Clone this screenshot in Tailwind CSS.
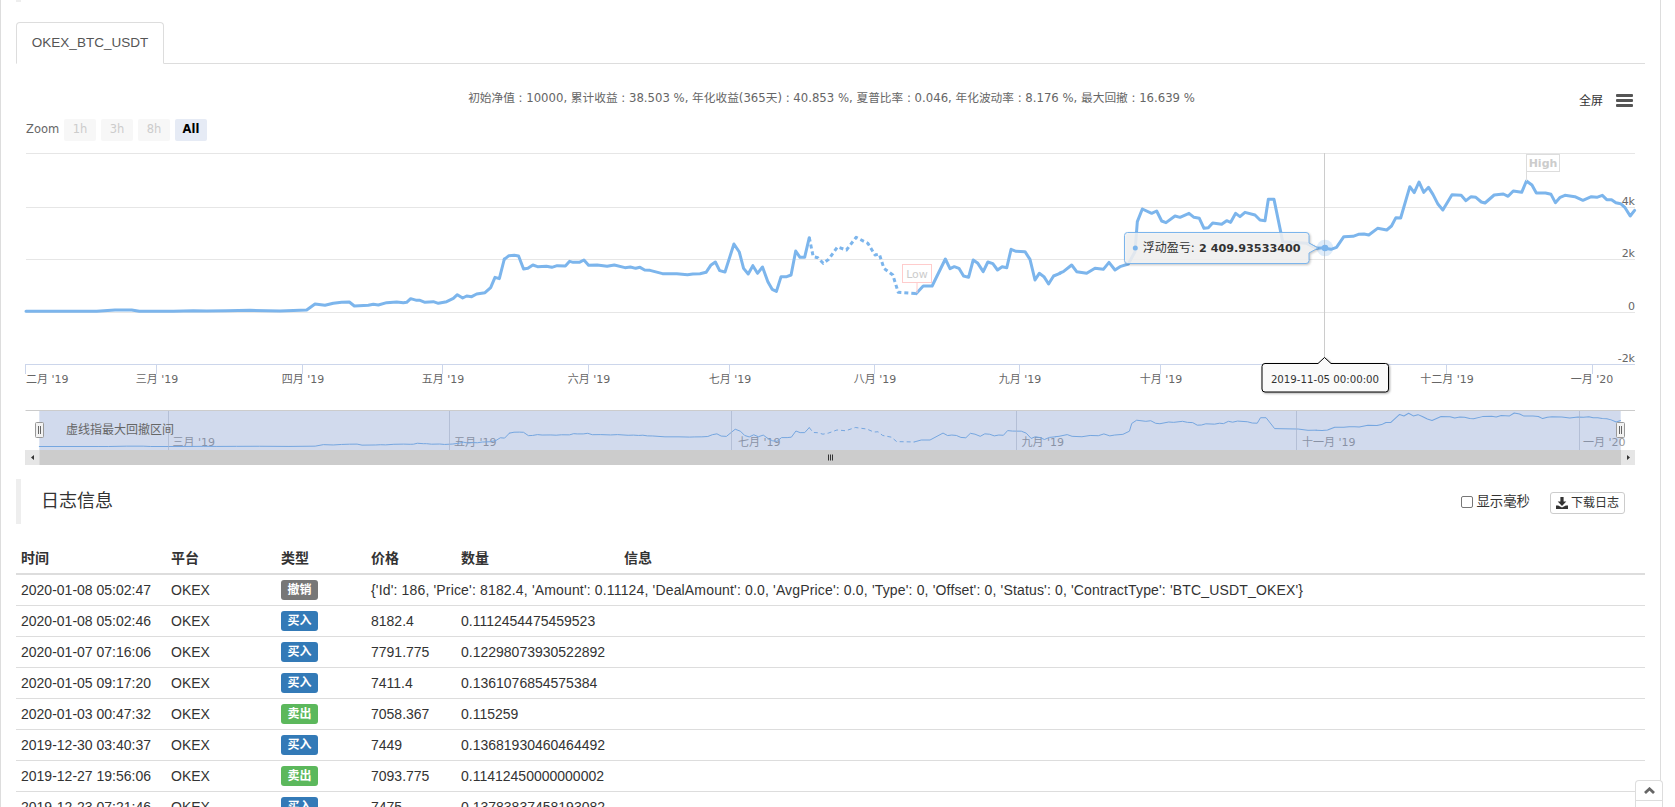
<!DOCTYPE html>
<html lang="zh">
<head>
    <meta charset="UTF-8">
    <meta name="viewport" content="width=device-width, initial-scale=1.0">
    <title>OKEX_BTC_USDT</title>
    <script src="https://cdn.jsdelivr.net/npm/@tailwindcss/browser@4"></script>
</head>
<body class="bg-white text-[#333] text-[14px] h-[807px] overflow-hidden relative font-['Liberation_Sans','Noto_Sans_CJK_SC',sans-serif]">

<div class="w-[1661px] h-[807px] border-x border-[#ddd] px-[15px] overflow-hidden">
    <div class="w-[5px] h-[2px] bg-[#eee]"></div>

    <!-- Tabs -->
    <div class="mt-[20px] h-[42px] border-b border-[#ddd] flex">
        <div class="w-[148px] h-[42px] border border-[#ddd] border-b-white rounded-t-[4px] bg-white flex items-center justify-center text-[13.5px] text-[#555]">OKEX_BTC_USDT</div>
    </div>

    <!-- Chart -->
    <svg class="block w-[1629px] h-[415px] font-['DejaVu_Sans','Noto_Sans_CJK_SC',sans-serif]" viewBox="16 64 1629 415" fill="none">
        <defs>
            <g id="pnl-line" stroke-linejoin="round" stroke-linecap="round">
                <polyline vector-effect="non-scaling-stroke" transform="translate(20 240) scale(.33333)" points="18,214 200,214 230,214 285,210 335,210 358,214 460,214 520,212 560,213 620,212 690,211 780,213 860,210 885,192 915,196 940,190 965,187 988,186 1003,198 1045,196 1060,193 1075,195 1100,188 1130,186 1150,188 1160,187 1172,176 1190,181 1200,181 1215,187 1240,185 1255,190 1280,185 1300,175 1312,164 1328,174 1340,168 1355,170 1370,162 1395,158 1412,143 1425,112 1438,116 1453,57" />
                <polyline vector-effect="non-scaling-stroke" transform="translate(500 150) scale(.35714 .33333)" points="12,328 25,317 40,316 52,318 66,357 78,355 92,345 105,350 130,349 145,352 160,347 183,348 195,334 205,337 222,337 235,330 248,346 272,345 300,349 320,345 350,353 365,351 380,355 392,352 405,360 420,361 455,371 495,371 525,374 540,372 560,371 577,367 590,346 603,336 615,362 630,366 655,282 670,306 682,355 695,372 708,347 721,370 735,351 750,395 762,418 774,424 787,380 803,380 815,375 828,303 840,322 853,322 866,263" />
                <polyline vector-effect="non-scaling-stroke" stroke-dasharray="4 3" stroke-linecap="butt" transform="translate(500 150) scale(.35714 .33333)" points="866,263 877,320 890,323 905,340 920,328 945,291 970,300 997,262 1030,280 1050,315 1062,312 1075,355 1100,375 1115,427 1165,431" />
                <polyline vector-effect="non-scaling-stroke" transform="translate(500 150) scale(.35714 .33333)" points="1165,431 1185,408 1210,408 1247,327 1260,356 1272,350 1285,355 1298,378 1312,382 1325,330 1338,340 1353,365 1366,336 1380,341 1393,360 1406,350 1419,353 1431,298 1445,304 1470,305 1484,328 1498,390 1510,370 1523,380 1536,402 1550,378 1568,370" />
                <polyline vector-effect="non-scaling-stroke" transform="translate(1040 190) scale(.33333)" points="60,249 70,245 95,225 110,245 140,250 165,235 190,238 207,217 225,240 240,230 265,222 285,185 292,95 307,57 335,70 350,63 365,93 378,98 405,78 420,82 447,70 462,82 478,85 492,115 505,113 518,99 545,103 560,92 572,97 587,70 600,80 615,67 645,75 660,90 675,92 685,28 702,28 722,125 728,155 800,160 830,175 855,173" />
                <polyline vector-effect="non-scaling-stroke" transform="translate(1100 60) scale(.36667 .33333)" points="613,565 630,568 645,562 665,530 690,529 705,523 720,522 733,525 757,505 782,510 795,498 807,473 820,474 845,380 857,398 870,366 883,397 896,382 908,403 922,433 935,450 960,404 985,406 998,422 1012,410 1025,412 1040,426 1050,429 1075,405 1100,402 1113,409 1127,393 1150,397 1163,363 1178,375 1190,399 1215,399 1230,403 1242,428 1255,412 1268,406 1295,410 1317,421 1340,410 1355,412 1370,406 1382,419 1395,419 1407,428 1420,431 1432,443 1446,468 1458,451" />
            </g>
        </defs>

        <text x="831.5" y="102" text-anchor="middle" class="fill-[#666] text-[11.7px]">初始净值 : 10000, 累计收益 : 38.503 %, 年化收益(365天) : 40.853 %, 夏普比率 : 0.046, 年化波动率 : 8.176 %, 最大回撤 : 16.639 %</text>

        <!-- fullscreen + menu -->
        <text x="1579" y="105" class="fill-[#333] text-[12px]">全屏</text>
        <rect x="1616" y="94" width="17" height="3" rx="1" class="fill-[#555]" />
        <rect x="1616" y="99" width="17" height="3" rx="1" class="fill-[#555]" />
        <rect x="1616" y="104" width="17" height="3" rx="1" class="fill-[#555]" />

        <!-- range selector -->
        <text x="26" y="133" class="fill-[#666] text-[11.5px]">Zoom</text>
        <rect x="64" y="119" width="32" height="22" rx="2" class="fill-[#f7f7f7]" />
        <rect x="101" y="119" width="32" height="22" rx="2" class="fill-[#f7f7f7]" />
        <rect x="138" y="119" width="32" height="22" rx="2" class="fill-[#f7f7f7]" />
        <rect x="175" y="119" width="32" height="22" rx="2" class="fill-[#e6ebf5]" />
        <text x="80" y="133" text-anchor="middle" class="fill-[#ccc] text-[11.5px]">1h</text>
        <text x="117" y="133" text-anchor="middle" class="fill-[#ccc] text-[11.5px]">3h</text>
        <text x="154" y="133" text-anchor="middle" class="fill-[#ccc] text-[11.5px]">8h</text>
        <text x="191" y="133" text-anchor="middle" class="fill-black text-[11.5px] font-bold">All</text>

        <!-- grid -->
        <g class="stroke-[#e6e6e6]">
            <line x1="26" x2="1635" y1="153.5" y2="153.5" />
            <line x1="26" x2="1635" y1="207.5" y2="207.5" />
            <line x1="26" x2="1635" y1="259.5" y2="259.5" />
            <line x1="26" x2="1635" y1="312.5" y2="312.5" />
        </g>
        <g text-anchor="end" class="fill-[#666] text-[11px]">
            <text x="1635" y="205">4k</text>
            <text x="1635" y="257">2k</text>
            <text x="1635" y="310">0</text>
            <text x="1635" y="362">-2k</text>
        </g>

        <!-- x axis -->
        <g class="stroke-[#ccd6eb]">
            <line x1="26" x2="1635" y1="364.5" y2="364.5" />
            <line x1="25.5" x2="25.5" y1="364" y2="374" />
            <line x1="156.5" x2="156.5" y1="364" y2="374" />
            <line x1="302.5" x2="302.5" y1="364" y2="374" />
            <line x1="442.5" x2="442.5" y1="364" y2="374" />
            <line x1="588.5" x2="588.5" y1="364" y2="374" />
            <line x1="729.5" x2="729.5" y1="364" y2="374" />
            <line x1="874.5" x2="874.5" y1="364" y2="374" />
            <line x1="1019.5" x2="1019.5" y1="364" y2="374" />
            <line x1="1160.5" x2="1160.5" y1="364" y2="374" />
            <line x1="1306.5" x2="1306.5" y1="364" y2="374" />
            <line x1="1446.5" x2="1446.5" y1="364" y2="374" />
            <line x1="1592.5" x2="1592.5" y1="364" y2="374" />
        </g>
        <g text-anchor="middle" class="fill-[#666] text-[11px]">
            <text x="26" y="383" text-anchor="start">二月 '19</text>
            <text x="157" y="383">三月 '19</text>
            <text x="303" y="383">四月 '19</text>
            <text x="443" y="383">五月 '19</text>
            <text x="589" y="383">六月 '19</text>
            <text x="730" y="383">七月 '19</text>
            <text x="875" y="383">八月 '19</text>
            <text x="1020" y="383">九月 '19</text>
            <text x="1161" y="383">十月 '19</text>
            <text x="1447" y="383">十二月 '19</text>
            <text x="1592" y="383">一月 '20</text>
        </g>

        <!-- crosshair -->
        <line x1="1324.5" x2="1324.5" y1="153" y2="358" class="stroke-[#ccc]" />

        <!-- series -->
        <use href="#pnl-line" stroke-width="3" class="stroke-[#7cb5ec]" />

        <!-- high / low flags -->
        <line x1="1526.5" x2="1526.5" y1="171" y2="181" class="stroke-[#ddd]" />
        <rect x="1526.5" y="154.5" width="33" height="17" class="stroke-[#ddd] fill-white" />
        <text x="1543" y="167" text-anchor="middle" class="fill-[#ccc] text-[11px] font-bold">High</text>
        <line x1="917" x2="917" y1="283" y2="293" class="stroke-[#fcc]" />
        <rect x="902.5" y="264.5" width="29" height="18" class="stroke-[#fcc] fill-white" />
        <text x="917" y="278" text-anchor="middle" class="fill-[#ccc] text-[11px]">Low</text>

        <!-- hover marker -->
        <circle cx="1325" cy="248" r="8.3" class="fill-[#7cb5ec]/25" />
        <circle cx="1325" cy="248" r="3.3" class="fill-[#7cb5ec]" />

        <!-- value tooltip -->
        <path d="M1127.5 232.5 H1306 a3 3 0 0 1 3 3 V243 L1318 248 L1309 253 V260.5 a3 3 0 0 1 -3 3 H1127.5 a3 3 0 0 1 -3 -3 V235.5 a3 3 0 0 1 3 -3 z" class="fill-[#f7f7f7]/85 stroke-[#7cb5ec] drop-shadow-[1px_1px_1px_rgba(0,0,0,0.25)]" />
        <circle cx="1135.3" cy="248" r="2.5" class="fill-[#7cb5ec]" />
        <text x="1142.7" y="252" class="fill-[#333] text-[12px]">浮动盈亏: <tspan x="1199" class="font-bold text-[11.2px]">2 409.93533400</tspan></text>

        <!-- date tooltip -->
        <path d="M1265 363.5 H1318 L1324.5 357.5 L1331 363.5 H1385.5 a3 3 0 0 1 3 3 V389 a3 3 0 0 1 -3 3 H1265 a3 3 0 0 1 -3 -3 V366.5 a3 3 0 0 1 3 -3 z" class="fill-[#fafafa] stroke-black drop-shadow-[1px_1px_1px_rgba(0,0,0,0.35)]" />
        <text x="1325" y="383" text-anchor="middle" class="fill-[#333] text-[10.2px]">2019-11-05 00:00:00</text>

        <!-- navigator -->
        <g text-anchor="start" class="fill-[#999] text-[11px]">
            <text x="172.5" y="446">三月 '19</text>
            <text x="454" y="446">五月 '19</text>
            <text x="738" y="446">七月 '19</text>
            <text x="1021.5" y="446">九月 '19</text>
            <text x="1302" y="446">十一月 '19</text>
            <text x="1583" y="446">一月 '20</text>
        </g>
        <use href="#pnl-line" transform="translate(13.74 366.5) scale(.983 .257)" stroke-width="1" class="stroke-[#7cb5ec]" />
        <rect x="39.3" y="411" width="1581.4" height="39" class="fill-[#6685c2]/30" />
        <g class="stroke-[#a8b4cc]/70">
            <line x1="168.5" x2="168.5" y1="411" y2="450" />
            <line x1="449.5" x2="449.5" y1="411" y2="450" />
            <line x1="731.5" x2="731.5" y1="411" y2="450" />
            <line x1="1016.5" x2="1016.5" y1="411" y2="450" />
            <line x1="1296.5" x2="1296.5" y1="411" y2="450" />
            <line x1="1579.5" x2="1579.5" y1="411" y2="450" />
        </g>
        <line x1="25.5" x2="1635" y1="410.5" y2="410.5" class="stroke-[#ccc]" />
        <text x="66" y="434" class="fill-[#666] text-[12px]">虚线指最大回撤区间</text>
        <g class="fill-[#f2f2f2] stroke-[#999]">
            <rect x="35.5" y="422.5" width="8" height="15" rx="1" />
            <rect x="1616.5" y="422.5" width="8" height="15" rx="1" />
        </g>
        <g class="stroke-[#666]">
            <path d="M38.5 426v8M40.5 426v8M1619.5 426v8M1621.5 426v8" />
        </g>

        <!-- scrollbar -->
        <rect x="25.5" y="450" width="1609.5" height="15" class="fill-[#ccc]" />
        <rect x="25.5" y="450" width="14" height="15" class="fill-[#e6e6e6]" />
        <rect x="1621" y="450" width="14" height="15" class="fill-[#e6e6e6]" />
        <path d="M34 455 L31 457.5 L34 460 z M1627 455 L1630 457.5 L1627 460 z" class="fill-[#333]" />
        <path d="M828.5 454.5v6M830.5 454.5v6M832.5 454.5v6" class="stroke-[#333]" />
    </svg>

    <!-- Log header -->
    <div class="h-[45px] border-l-[5px] border-[#eee] pl-[20px] pr-[20px] flex items-center justify-between">
        <h2 class="text-[18px] text-[#333]">日志信息</h2>
        <div class="flex items-center gap-[20px] mt-[2px]">
            <label class="flex items-center gap-[3px] text-[13.4px] text-[#333]">
                <input type="checkbox" class="w-[12px] h-[12px] appearance-none border border-[#777] rounded-[2px] bg-white">
                显示毫秒
            </label>
            <button class="h-[22px] w-[75px] border border-[#ccc] rounded-[3px] bg-white flex items-center justify-center gap-[3px] text-[12px] text-[#333]">
                <svg class="w-[12px] h-[12px]" viewBox="0 0 12 12"><path class="fill-[#333]" d="M4.4 0h3.2v4.6h2.7L6 9 1.7 4.6h2.7zM0 8.6h2.2L6 10.6l3.8-2H12V12H0z" /></svg>
                下载日志
            </button>
        </div>
    </div>

    <!-- Log table -->
    <table class="mt-[19px] w-full table-fixed border-separate border-spacing-0 text-left">
        <colgroup>
            <col class="w-[150px]"><col class="w-[110px]"><col class="w-[90px]"><col class="w-[90px]"><col class="w-[163px]"><col>
        </colgroup>
        <thead>
            <tr class="h-[32px]">
                <th class="border-b-2 border-[#ddd] pl-[5px] font-bold">时间</th>
                <th class="border-b-2 border-[#ddd] pl-[5px] font-bold">平台</th>
                <th class="border-b-2 border-[#ddd] pl-[5px] font-bold">类型</th>
                <th class="border-b-2 border-[#ddd] pl-[5px] font-bold">价格</th>
                <th class="border-b-2 border-[#ddd] pl-[5px] font-bold">数量</th>
                <th class="border-b-2 border-[#ddd] pl-[5px] font-bold">信息</th>
            </tr>
        </thead>
        <tbody>
            <tr class="h-[31px]">
                <td class="border-b border-[#ddd] pl-[5px]">2020-01-08 05:02:47</td>
                <td class="border-b border-[#ddd] pl-[5px]">OKEX</td>
                <td class="border-b border-[#ddd] pl-[5px]"><span class="block w-[37px] h-[20px] leading-[20px] rounded-[3px] bg-[#777] text-white text-[12px] font-bold text-center">撤销</span></td>
                <td colspan="3" class="border-b border-[#ddd] pl-[5px] whitespace-nowrap tracking-[0.16px]">{'Id': 186, 'Price': 8182.4, 'Amount': 0.11124, 'DealAmount': 0.0, 'AvgPrice': 0.0, 'Type': 0, 'Offset': 0, 'Status': 0, 'ContractType': 'BTC_USDT_OKEX'}</td>
            </tr>
            <tr class="h-[31px]">
                <td class="border-b border-[#ddd] pl-[5px]">2020-01-08 05:02:46</td>
                <td class="border-b border-[#ddd] pl-[5px]">OKEX</td>
                <td class="border-b border-[#ddd] pl-[5px]"><span class="block w-[37px] h-[20px] leading-[20px] rounded-[3px] bg-[#337ab7] text-white text-[12px] font-bold text-center">买入</span></td>
                <td class="border-b border-[#ddd] pl-[5px]">8182.4</td>
                <td class="border-b border-[#ddd] pl-[5px]">0.1112454475459523</td>
                <td class="border-b border-[#ddd] pl-[5px]"></td>
            </tr>
            <tr class="h-[31px]">
                <td class="border-b border-[#ddd] pl-[5px]">2020-01-07 07:16:06</td>
                <td class="border-b border-[#ddd] pl-[5px]">OKEX</td>
                <td class="border-b border-[#ddd] pl-[5px]"><span class="block w-[37px] h-[20px] leading-[20px] rounded-[3px] bg-[#337ab7] text-white text-[12px] font-bold text-center">买入</span></td>
                <td class="border-b border-[#ddd] pl-[5px]">7791.775</td>
                <td class="border-b border-[#ddd] pl-[5px]">0.12298073930522892</td>
                <td class="border-b border-[#ddd] pl-[5px]"></td>
            </tr>
            <tr class="h-[31px]">
                <td class="border-b border-[#ddd] pl-[5px]">2020-01-05 09:17:20</td>
                <td class="border-b border-[#ddd] pl-[5px]">OKEX</td>
                <td class="border-b border-[#ddd] pl-[5px]"><span class="block w-[37px] h-[20px] leading-[20px] rounded-[3px] bg-[#337ab7] text-white text-[12px] font-bold text-center">买入</span></td>
                <td class="border-b border-[#ddd] pl-[5px]">7411.4</td>
                <td class="border-b border-[#ddd] pl-[5px]">0.1361076854575384</td>
                <td class="border-b border-[#ddd] pl-[5px]"></td>
            </tr>
            <tr class="h-[31px]">
                <td class="border-b border-[#ddd] pl-[5px]">2020-01-03 00:47:32</td>
                <td class="border-b border-[#ddd] pl-[5px]">OKEX</td>
                <td class="border-b border-[#ddd] pl-[5px]"><span class="block w-[37px] h-[20px] leading-[20px] rounded-[3px] bg-[#5cb85c] text-white text-[12px] font-bold text-center">卖出</span></td>
                <td class="border-b border-[#ddd] pl-[5px]">7058.367</td>
                <td class="border-b border-[#ddd] pl-[5px]">0.115259</td>
                <td class="border-b border-[#ddd] pl-[5px]"></td>
            </tr>
            <tr class="h-[31px]">
                <td class="border-b border-[#ddd] pl-[5px]">2019-12-30 03:40:37</td>
                <td class="border-b border-[#ddd] pl-[5px]">OKEX</td>
                <td class="border-b border-[#ddd] pl-[5px]"><span class="block w-[37px] h-[20px] leading-[20px] rounded-[3px] bg-[#337ab7] text-white text-[12px] font-bold text-center">买入</span></td>
                <td class="border-b border-[#ddd] pl-[5px]">7449</td>
                <td class="border-b border-[#ddd] pl-[5px]">0.13681930460464492</td>
                <td class="border-b border-[#ddd] pl-[5px]"></td>
            </tr>
            <tr class="h-[31px]">
                <td class="border-b border-[#ddd] pl-[5px]">2019-12-27 19:56:06</td>
                <td class="border-b border-[#ddd] pl-[5px]">OKEX</td>
                <td class="border-b border-[#ddd] pl-[5px]"><span class="block w-[37px] h-[20px] leading-[20px] rounded-[3px] bg-[#5cb85c] text-white text-[12px] font-bold text-center">卖出</span></td>
                <td class="border-b border-[#ddd] pl-[5px]">7093.775</td>
                <td class="border-b border-[#ddd] pl-[5px]">0.11412450000000002</td>
                <td class="border-b border-[#ddd] pl-[5px]"></td>
            </tr>
            <tr class="h-[31px]">
                <td class="border-b border-[#ddd] pl-[5px]">2019-12-23 07:21:46</td>
                <td class="border-b border-[#ddd] pl-[5px]">OKEX</td>
                <td class="border-b border-[#ddd] pl-[5px]"><span class="block w-[37px] h-[20px] leading-[20px] rounded-[3px] bg-[#337ab7] text-white text-[12px] font-bold text-center">买入</span></td>
                <td class="border-b border-[#ddd] pl-[5px]">7475</td>
                <td class="border-b border-[#ddd] pl-[5px]">0.13783837458193082</td>
                <td class="border-b border-[#ddd] pl-[5px]"></td>
            </tr>
        </tbody>
    </table>
</div>

<!-- Back to top -->
<div class="absolute left-[1635px] bottom-0 w-[28px] h-[27px] bg-white border border-b-0 border-[#ddd] rounded-t-[4px]">
    <div class="h-[20px] border-b border-[#ddd] flex items-center justify-center">
        <svg class="w-[11px] h-[7px]" viewBox="0 0 11 7"><path d="M1 6 L5.5 1.8 L10 6" class="fill-none stroke-[#666] stroke-[2.8]" /></svg>
    </div>
</div>
</body>
</html>
